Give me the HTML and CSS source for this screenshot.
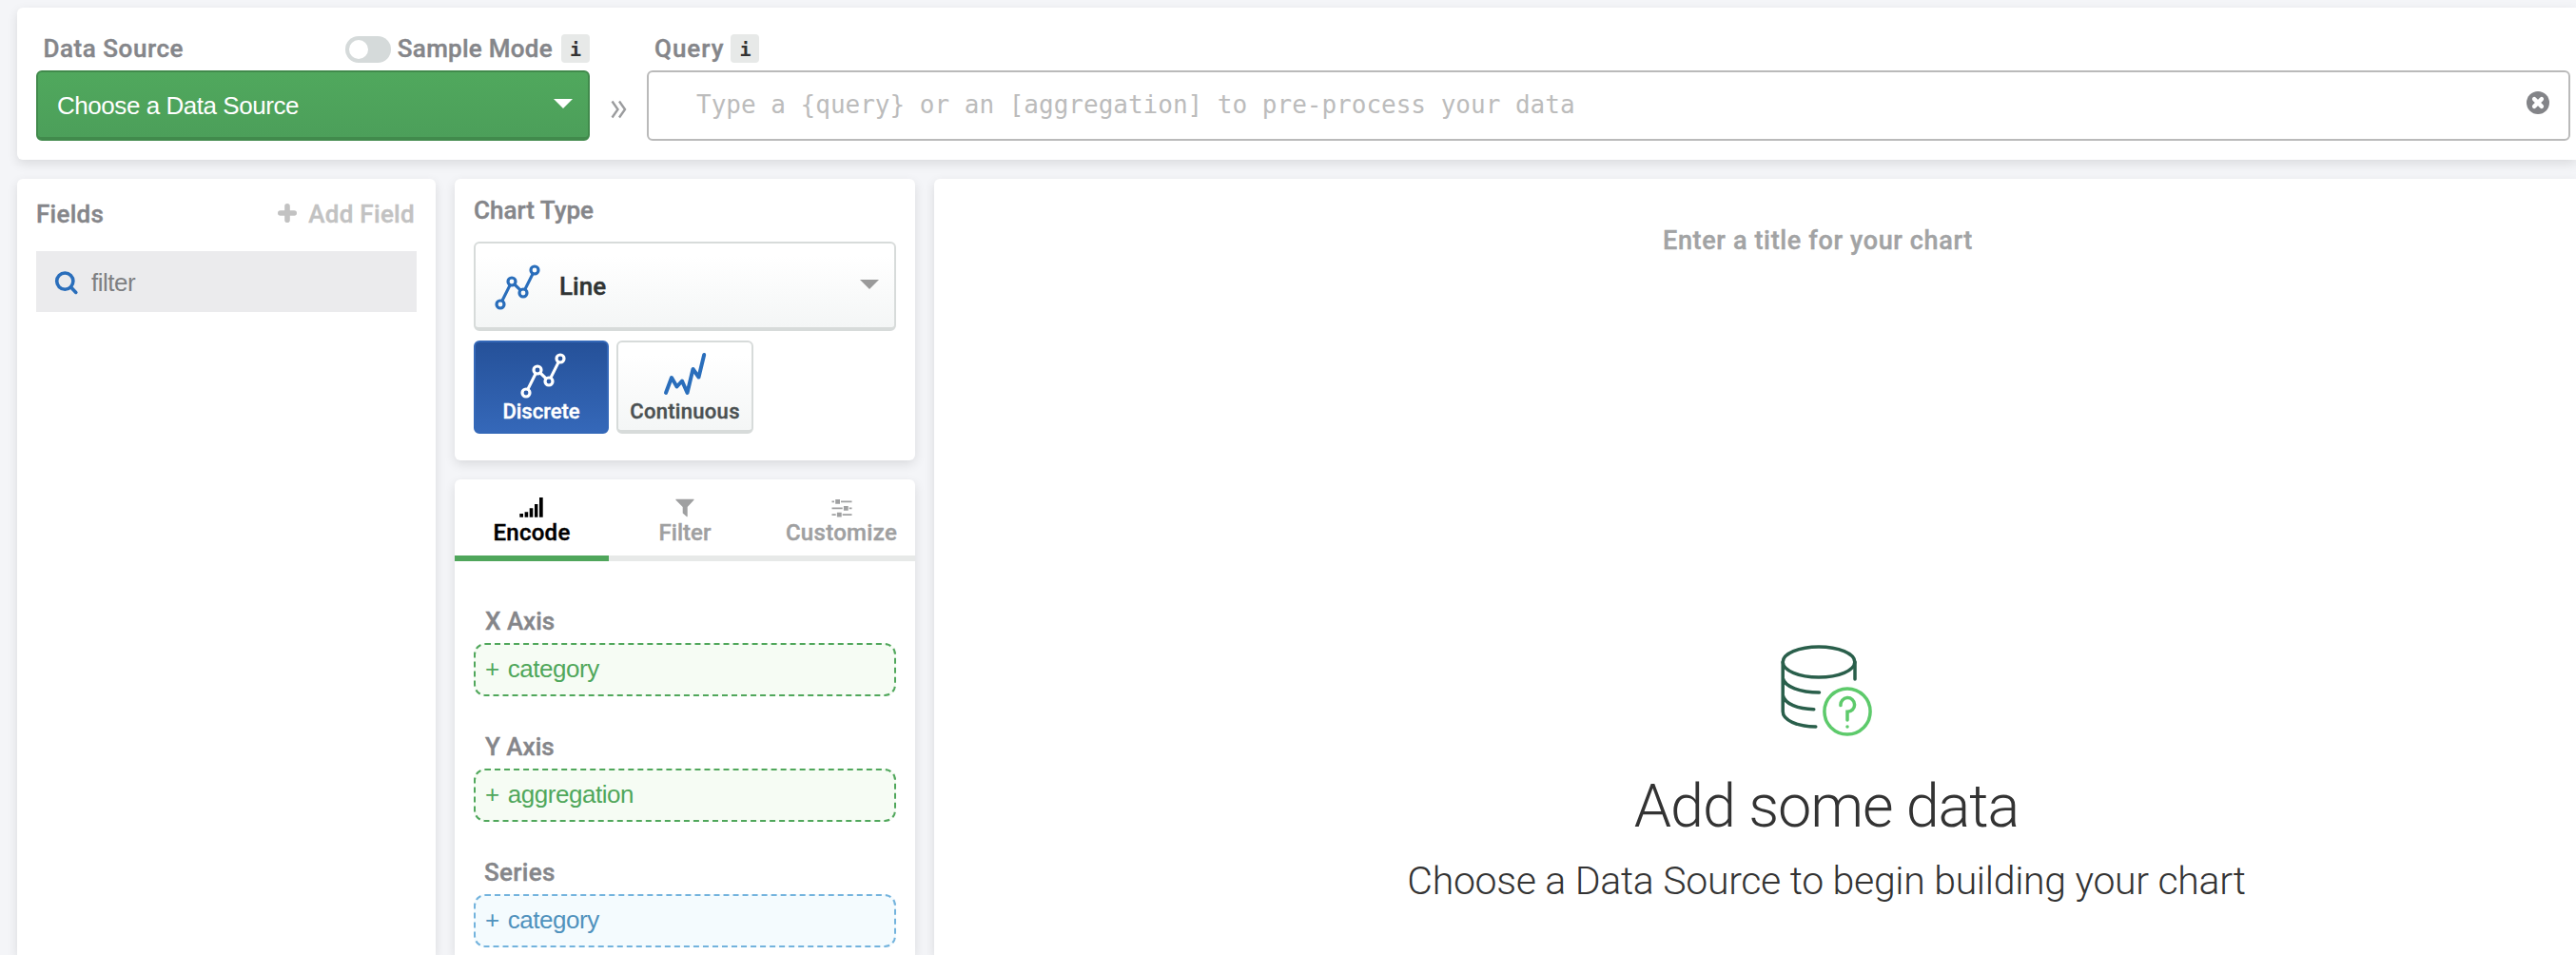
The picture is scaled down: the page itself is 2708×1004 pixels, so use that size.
FILE: index.html
```html
<!DOCTYPE html>
<html lang="en">
<head>
<meta charset="utf-8">
<title>Chart Builder</title>
<link rel="stylesheet" href="styles.css">
</head>
<body>
<svg class="defs" width="0" height="0">
  <symbol id="line-discrete" viewBox="0 0 48 48">
    <path d="M7.8 38.4 16.2 21.6M20.8 20.8l6.4 6.4M31.8 26.4 40.2 9.6"/>
    <circle cx="6" cy="42" r="4"/><circle cx="18" cy="18" r="4"/><circle cx="30" cy="30" r="4"/><circle cx="42" cy="6" r="4"/>
  </symbol>
</svg>

<header class="card query-bar">
  <section class="source">
    <div class="label-row">
      <span class="label source-label">Data Source</span>
      <span class="toggle"><span class="knob"></span></span>
      <span class="label sample-label">Sample Mode</span>
      <span class="info">i</span>
    </div>
    <div class="source-button"><span>Choose a Data Source</span><i class="caret caret-white"></i></div>
  </section>
  <svg class="chevrons" width="18" height="22" viewBox="0 0 18 22"><path d="M1.5 2.5 7.5 11l-6 8.5M9 2.5l6 8.5-6 8.5"/></svg>
  <section class="query">
    <div class="label-row">
      <span class="label query-label">Query</span>
      <span class="info">i</span>
    </div>
    <div class="query-input">
      <span>Type a {query} or an [aggregation] to pre-process your data</span>
      <svg width="24" height="24" viewBox="0 0 24 24"><circle cx="12" cy="12" r="12" fill="#838488"/><path d="M8.1 8.1l7.8 7.8M15.9 8.1l-7.8 7.8" stroke="#fff" stroke-width="4.4" stroke-linecap="round"/></svg>
    </div>
  </section>
</header>

<div class="workspace">
  <aside class="card fields">
    <div class="fields-head">
      <span class="label fields-label">Fields</span>
      <span class="add-field"><svg width="20" height="20" viewBox="0 0 20 20"><path d="M10 2.8v14.4M2.8 10h14.4" stroke="#c2c2c2" stroke-width="5.6" stroke-linecap="round"/></svg>Add Field</span>
    </div>
    <div class="filter-box">
      <svg width="24" height="25" viewBox="0 0 24 25"><circle cx="10.3" cy="10.6" r="8.6"/><path d="M16.6 17l5.2 5.4"/></svg>
      <span>filter</span>
    </div>
  </aside>

  <div class="middle">
    <section class="card chart-type">
      <div class="label">Chart Type</div>
      <div class="type-select">
        <svg class="icon-line" width="48" height="48"><use href="#line-discrete"/></svg>
        <span>Line</span>
        <i class="caret caret-grey"></i>
      </div>
      <div class="variants">
        <div class="variant active">
          <svg class="icon-line" width="48" height="48"><use href="#line-discrete"/></svg>
          <span>Discrete</span>
        </div>
        <div class="variant continuous">
          <svg class="icon-line icon-bold" width="48" height="48" viewBox="0 0 48 48"><path d="M4 42l6-16 5.5 9.5 5.5-6L26.500 42l6-25 6 8.500L44.200 2"/></svg>
          <span>Continuous</span>
        </div>
      </div>
    </section>

    <section class="card encoding">
      <nav class="tabs">
        <div class="tab tab-encode selected">
          <svg width="26" height="22" viewBox="0 0 26 22"><path d="M.3 18H4v3.7H.3zM5.600 16.300h3.600v5.400H5.600zM10.700 12.300h3.600v9.400h-3.600zM16 8h3.400v13.700H16zM21 1h3.700v20.700H21z"/></svg>
          <span>Encode</span>
        </div>
        <div class="tab tab-filter">
          <svg width="20" height="22" viewBox="0 0 20 22"><path d="M.8 2.700h18.400c.4 0 .5.600.2 1L12.700 11v9.700c0 .6-.5.8-1 .4l-4-3.700V11L.5 3.700c-.3-.4-.1-1 .3-1z"/></svg>
          <span>Filter</span>
        </div>
        <div class="tab tab-customize">
          <svg width="22" height="22" viewBox="0 0 22 22"><path d="M.5 4.600h21v1.600H.5zM.5 11.600h21v1.600H.5zM.5 18.300h21v1.600H.5z"/><path d="M3 2h7v7H3zM11.700 9h7v7h-7zM4.700 15.700h7v7h-7z" fill="#fff"/><path d="M4.200 3h4.800v4.800H4.200zM12.900 10h4.800v4.800h-4.800zM5.900 16.700h4.800v4.800H5.900z"/></svg>
          <span>Customize</span>
        </div>
      </nav>
      <div class="channels">
        <div class="channel">
          <div class="label axis-label">X Axis</div>
          <div class="drop green"><span>+</span><span>category</span></div>
        </div>
        <div class="channel">
          <div class="label axis-label">Y Axis</div>
          <div class="drop green"><span>+</span><span>aggregation</span></div>
        </div>
        <div class="channel">
          <div class="label axis-label series-label">Series</div>
          <div class="drop blue"><span>+</span><span>category</span></div>
        </div>
      </div>
    </section>
  </div>

  <main class="card chart">
    <div class="chart-title">Enter a title for your chart</div>
    <div class="empty">
      <svg width="96" height="96" viewBox="0 0 96 96">
        <g stroke="#2a5f4b"><ellipse cx="40" cy="18" rx="37.800" ry="16"/><path d="M2.200 18v52c0 9 15 15.800 34.600 16M2.200 35c2 9 18 15 38.300 15M2.200 53c2 9 16 14.600 32.600 14.700M78 18v18"/></g>
        <g stroke="#5dca6b"><circle cx="70" cy="70" r="24.100"/><path d="M63 63.500a7.300 7.300 0 1 1 7.300 6.700H70V79M70 86v.1"/></g>
      </svg>
      <h1>Add some data</h1>
      <p>Choose a Data Source to begin building your chart</p>
    </div>
  </main>
</div>
</body>
</html>
```
FILE: styles.css
```css
* { box-sizing: border-box; }
body {
  margin: 0;
  height: 1004px;
  overflow: hidden;
  background: #f4f5f8;
  padding: 8px 0 0 18px;
  font-family: "Liberation Sans", Arial, sans-serif;
  font-size: 26px;
  color: #85868a;
}
svg { display: block; flex: none; fill: none; overflow: visible; }
.defs { position: absolute; }
.card {
  background: #fff;
  border-radius: 6px;
  box-shadow: 0 4px 12px rgba(0, 0, 0, .11);
}
.label, .add-field, .chart-title, .type-select, .variant, .tab { -webkit-text-stroke: .4px currentColor; }
.label {
  font: 500 26px/30px Roboto, sans-serif;
  color: #85868a;
  white-space: nowrap;
}

/* Top bar */
.query-bar {
  height: 160px;
  padding: 28px 6px 20px 20px;
  display: flex;
  border-radius: 6px 0 0 6px;
}
.source { width: 582px; }
.label-row { display: flex; align-items: center; height: 30px; margin-bottom: 8px; }
.source-label { margin-left: 7.5px; letter-spacing: .54px; }
.sample-label { margin: 0 9px 0 7px; letter-spacing: .28px; }
.query-label { margin: 0 7px 0 8px; letter-spacing: 1px; }
.toggle {
  width: 48px; height: 28px;
  margin: 2px 0 0 auto;
  border-radius: 14px;
  background: #d5dada;
  padding: 4px;
}
.knob { display: block; width: 20px; height: 20px; border-radius: 50%; background: #fff; }
.info {
  width: 30px; height: 30px;
  border-radius: 4px;
  background: #e7e9e8;
  color: #333;
  font: bold 20px/32px "DejaVu Sans Mono", monospace;
  text-align: center;
}
.source-button {
  height: 74px;
  border: 2px solid #418a4c;
  border-bottom-width: 4px;
  border-radius: 6px;
  background: linear-gradient(#50a85d, #4c9f5a);
  color: #fff;
  padding: 2px 16px 0 20px;
  display: flex;
  justify-content: space-between;
  line-height: 66px;
  letter-spacing: -.45px;
}
.caret { border: 10px solid transparent; border-bottom: 0; height: 0; width: 0; }
.caret-white { border-top-color: #fff; margin-top: 26px; }
.caret-grey { border-top-color: #9a9a9a; margin-left: auto; }
.chevrons { margin: 68px 20px 0 22px; stroke: #9b9c9e; stroke-width: 2.4; }
.query { flex: 1; }
.query-input {
  height: 74px;
  border: 2px solid #bababa;
  border-radius: 6px;
  padding: 0 20px 6px 50px;
  display: flex;
  align-items: center;
  justify-content: space-between;
  color: #bcbcbc;
  font: 26px/30px "DejaVu Sans Mono", monospace;
}
.query-input span { padding-top: 3px; }

/* Columns */
.workspace { display: flex; gap: 20px; margin-top: 20px; height: 816px; }
.fields { flex: none; width: 440px; padding: 22px 20px; border-radius: 6px 6px 0 0; }
.fields-head { display: flex; justify-content: space-between; }
.fields-label { letter-spacing: .26px; }
.add-field {
  display: flex; gap: 12px;
  font: 500 26px/30px Roboto, sans-serif;
  letter-spacing: .3px;
  color: #c2c2c2;
  padding-right: 2px;
}
.add-field svg { margin-top: 4px; }
.filter-box {
  margin-top: 24px;
  height: 64px;
  background: #ebebed;
  color: #7e7f82;
  display: flex;
  align-items: center;
  gap: 14px;
  padding: 2px 20px 0;
  letter-spacing: -.5px;
}
.filter-box svg { stroke: #2a6ebb; stroke-width: 3.6; stroke-linecap: round; }
.filter-box span { line-height: 30px; }

.middle { flex: none; width: 484px; display: flex; flex-direction: column; gap: 20px; }
.chart-type { height: 296px; padding: 18px 20px; }
.type-select {
  height: 94px;
  margin: 18px 0 10px;
  border: 2px solid #d7dbda;
  border-bottom-width: 4px;
  border-radius: 6px;
  background: linear-gradient(#fff 15%, #f4f6f6);
  display: flex;
  align-items: center;
  padding: 0 16px 0 20px;
  font: 500 26px/30px Roboto, sans-serif;
  color: #303433;
}
.type-select span { margin-left: 20px; padding-top: 1px; }
.type-select .icon-line { margin-top: 4px; }
.type-select .caret { margin-top: -2px; }
.icon-line { stroke: #2a6ebb; stroke-width: 3.2; }
.icon-bold { stroke-width: 4; stroke-linecap: round; stroke-linejoin: round; }
.variants { display: flex; gap: 8px; }
.variant {
  width: 144px; height: 98px;
  border: 2px solid #d7dbda;
  border-bottom-width: 4px;
  border-radius: 6px;
  background: linear-gradient(#fff 15%, #f4f6f6);
  padding-top: 11px;
  display: flex;
  flex-direction: column;
  align-items: center;
  gap: 1px;
  font: 500 22px/26px Roboto, sans-serif;
  color: #4b5152;
}
.variant.active {
  width: 142px;
  border: 2px solid #3468b8;
  background: linear-gradient(#255199, #3568b9);
  color: #fff;
}
.active .icon-line { stroke: #fff; margin-left: 3px; }
.continuous { letter-spacing: .3px; }

.encoding { flex: 1; border-radius: 6px 6px 0 0; }
.tabs { display: grid; grid-template-columns: 162px 160px 1fr; }
.tab {
  height: 86px;
  border-bottom: 6px solid #e7e9e8;
  padding-top: 18px;
  display: flex;
  flex-direction: column;
  align-items: center;
  gap: 2px;
  font: 500 24px/28px Roboto, sans-serif;
  color: #9fa0a1;
}
.tab svg { fill: currentColor; }
.tab-encode { letter-spacing: .28px; }
.tab.selected { color: #000; border-color: #4fa65b; }
.tab-customize { padding-left: 7px; letter-spacing: .3px; }
.channels { padding: 48px 20px 0; display: flex; flex-direction: column; gap: 38px; }
.axis-label { padding-left: 12px; margin-bottom: 8px; }
.series-label { padding-left: 11px; letter-spacing: .3px; }
.drop {
  height: 56px;
  border: 2px dashed;
  border-radius: 12px;
  padding: 0 10px 1px;
  display: flex;
  align-items: center;
  gap: 9px;
  letter-spacing: -.45px;
}
.green { background: #f6fcf4; border-color: #50a75b; color: #50a75b; }
.blue { background: #f4fbfe; border-color: #73b3dd; color: #5092bd; }

/* Chart canvas */
.chart {
  flex: 1;
  border-radius: 6px 0 0 0;
  padding: 50px 0 0 150px;
  display: flex;
  flex-direction: column;
  align-items: center;
}
.chart-title {
  font: 500 27px/30px Roboto, sans-serif;
  letter-spacing: .65px;
  color: #a2a3a4;
  margin-right: 18px;
}
.empty {
  margin-top: 410px;
  display: flex;
  flex-direction: column;
  align-items: center;
  color: #333;
  font-family: Roboto, sans-serif;
  font-weight: 300;
}
.empty svg { stroke-width: 3.5; stroke-linecap: round; }
.empty h1 { margin: 38px 0 0; font-size: 63px; line-height: 72px; font-weight: 300; letter-spacing: -1.1px; }
.empty p { margin: 17px 0 0; font-size: 41px; line-height: 50px; letter-spacing: -.3px; }
```
